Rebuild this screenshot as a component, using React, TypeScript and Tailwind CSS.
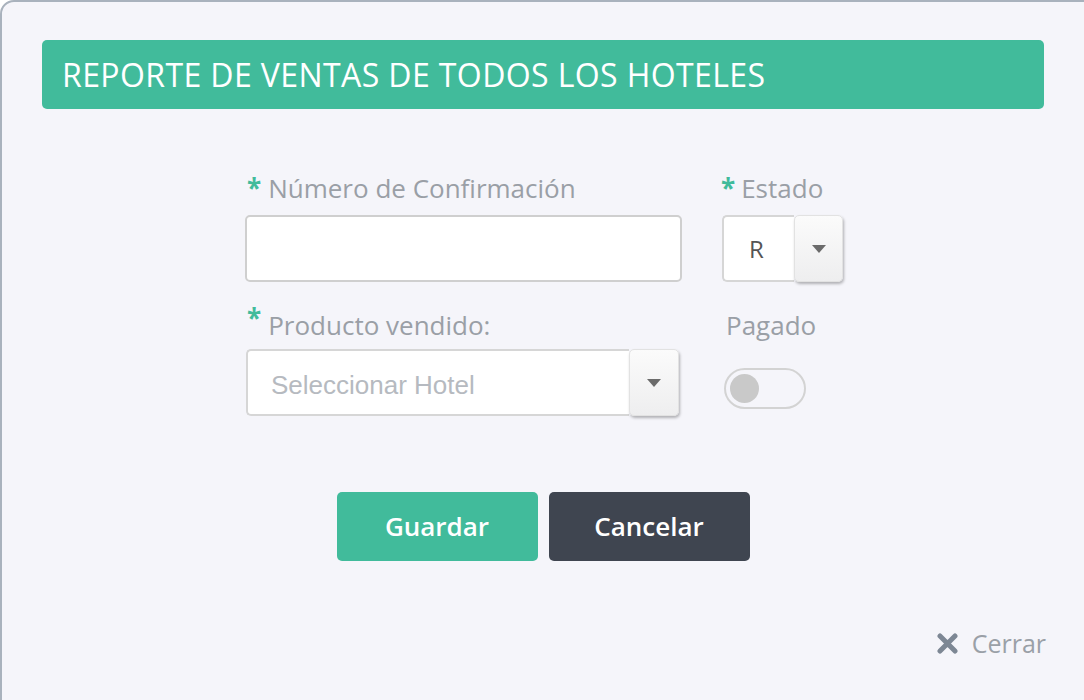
import React, { useState } from "react";

const font = { fontFamily: '"Open Sans", "Noto Sans", sans-serif' };

const Caret = () => (
  <svg width="14" height="8" viewBox="0 0 14 8">
    <path d="M0 0 H14 L7 8 Z" fill="#6b6b6b" />
  </svg>
);

const App = () => {
  const [confirmacion, setConfirmacion] = useState("");
  const [pagado, setPagado] = useState(false);

  return (
    <div className="w-[1084px] h-[700px] overflow-hidden" style={font}>
      <div className="w-[1100px] h-[740px] border-2 border-[#a9b2bd] rounded-t-[14px] bg-[#f5f5fa] pt-[38px] pl-[40px]">
        {/* header */}
        <div className="w-[1002px] h-[69px] bg-[#41bb9b] rounded-[5px] pl-[20px] flex items-center">
          <h1 className="text-white text-[32px] tracking-[0.4px]">REPORTE DE VENTAS DE TODOS LOS HOTELES</h1>
        </div>

        <div className="w-[1002px]">
          <div className="ml-[203px] mt-[62px] grid grid-cols-[437px_121px] gap-x-[40px]">
            {/* row 1 */}
            <div>
              <label className="h-[34px] flex items-center text-[26px] text-[#9a9fa6]">
                <span className="text-[#41bb9b] font-bold mr-[7px] ml-[2px]">*</span>
                Número de Confirmación
              </label>
              <input
                className="mt-[10px] w-[437px] h-[67px] bg-white border-2 border-[#cfcfcf] rounded-[5px] px-4 text-[22px] text-[#555] outline-none"
                value={confirmacion}
                onChange={e => setConfirmacion(e.target.value)}
              />
            </div>
            <div>
              <label className="h-[34px] flex items-center text-[26px] text-[#9a9fa6]">
                <span className="text-[#41bb9b] font-bold mr-[6px] -ml-[1px]">*</span>
                Estado
              </label>
              <div className="mt-[10px] w-[121px] h-[67px] flex">
                <div className="w-[72px] h-full bg-white border-2 border-r-0 border-[#d6d6d6] rounded-l-[5px] flex items-center pl-[25px] text-[24px] text-[#555]">
                  R
                </div>
                <div className="flex-1 h-full bg-gradient-to-b from-[#fbfbfb] to-[#eeeeef] rounded-[5px] shadow-[1px_2px_3px_rgba(0,0,0,0.28)] border border-[#e2e2e2] flex items-center justify-center">
                  <Caret />
                </div>
              </div>
            </div>

            {/* row 2 */}
            <div className="mt-[26px]">
              <label className="h-[34px] flex items-center text-[26px] text-[#9a9fa6]">
                <span className="text-[#41bb9b] font-bold mr-[7px] ml-[2px] -mt-[14px]">*</span>
                Producto vendido:
              </label>
              <div className="mt-[7px] ml-[1px] w-[433px] h-[67px] flex">
                <div
                  className="flex-1 h-full bg-white border-2 border-r-0 border-[#d6d6d6] rounded-l-[5px] flex items-center pl-[23px] pt-[5px] text-[26px] text-[#b6bac0]"
                  style={{ fontFamily: '"Liberation Sans", Arial, sans-serif' }}
                >
                  Seleccionar Hotel
                </div>
                <div className="w-[50px] h-full bg-gradient-to-b from-[#fbfbfb] to-[#eeeeef] rounded-[5px] shadow-[1px_2px_3px_rgba(0,0,0,0.28)] border border-[#e2e2e2] flex items-center justify-center">
                  <Caret />
                </div>
              </div>
            </div>
            <div className="mt-[26px]">
              <label className="h-[34px] flex items-center text-[26px] text-[#9a9fa6] pl-[4px]">Pagado</label>
              <button
                type="button"
                onClick={() => setPagado(!pagado)}
                className="mt-[26px] ml-[2px] w-[82px] h-[41px] rounded-full border-2 border-[#d3d3d3] flex items-center px-[4px]"
              >
                <span className="w-[29px] h-[29px] rounded-full bg-[#c9c9c9] block" />
              </button>
            </div>
          </div>

          {/* buttons */}
          <div className="mt-[76px] flex justify-center gap-[11px]">
            <button className="w-[201px] h-[69px] rounded-[5px] bg-[#41bb9b] text-white text-[26px] font-semibold">
              Guardar
            </button>
            <button className="w-[201px] h-[69px] rounded-[5px] bg-[#3f4550] text-white text-[26px] font-semibold">
              Cancelar
            </button>
          </div>

          {/* close */}
          <div className="mt-[64px] flex justify-end">
            <button className="flex items-center gap-[14px] text-[25px] text-[#9aa0a7] -mr-[2px]">
              <svg width="21" height="21" viewBox="0 0 21 21">
                <path d="M3 3 L18 18 M18 3 L3 18" stroke="#7d8794" strokeWidth="5" strokeLinecap="round" />
              </svg>
              Cerrar
            </button>
          </div>
        </div>
      </div>
    </div>
  );
};

export default App;
